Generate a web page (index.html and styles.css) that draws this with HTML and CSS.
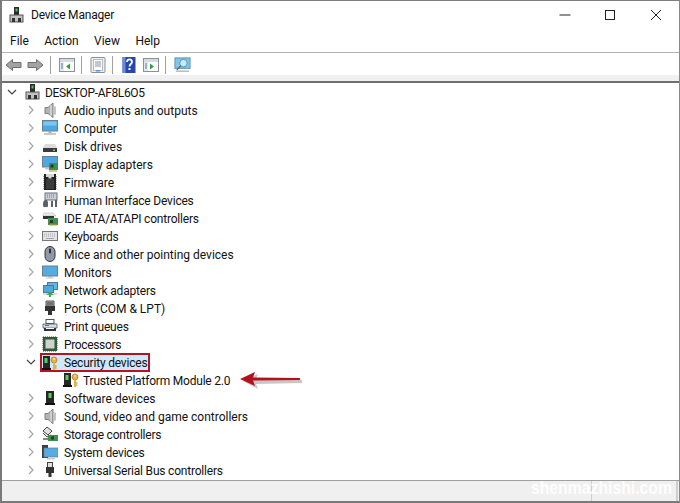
FILE: index.html
```html
<!DOCTYPE html>
<html lang="en">
<head>
<meta charset="utf-8">
<title>Device Manager</title>
<link rel="stylesheet" href="styles.css">
</head>
<body>
<svg class="defs" aria-hidden="true">
  <defs>
    <symbol id="pc" viewBox="0 0 16 16">
      <rect x="5" y="0" width="5" height="8" fill="#2a2a2a"/><rect x="6.500" y="1.500" width="2" height="3" fill="#5fbf5f"/>
      <rect x="1" y="8" width="13" height="7" fill="#c2c2c2" stroke="#555" stroke-width="1"/><rect x="3" y="11" width="3" height="4" fill="#333"/><rect x="9" y="11" width="3" height="4" fill="#333"/>
    </symbol>
    <symbol id="speaker" viewBox="0 0 16 16">
      <path d="M3 5.500h3L11 1v14.500L6 11.500H3z" fill="#b3b3b3" stroke="#808080"/><path d="M9 3v11" stroke="#e8e8e8"/><path d="M13 4.500v8" stroke="#c4c4c4" stroke-width="2"/>
    </symbol>
    <symbol id="monitor" viewBox="0 0 16 16">
      <rect x=".5" y=".5" width="15" height="10.500" fill="#4ea8e0" stroke="#6a7f90"/><rect x="1.500" y="1.500" width="13" height="4" fill="#7cc6f0"/><rect x="6.500" y="11" width="3" height="2" fill="#aab"/><rect x="2" y="13" width="12" height="2" fill="#c5c9ce"/>
    </symbol>
    <symbol id="disk" viewBox="0 0 16 16">
      <path d="M3 6h10l2 4v4H1v-4z" fill="#dcdcdc"/><rect x="1" y="10" width="14" height="4" fill="#3b3b3b"/><rect x="11" y="11.500" width="2" height="1.500" fill="#4ee04e"/>
    </symbol>
    <symbol id="display" viewBox="0 0 16 16">
      <rect x=".5" y=".5" width="15" height="10.500" fill="#4ea8e0" stroke="#6a7f90"/><rect x="3" y="12" width="5" height="1.500" fill="#c5c9ce"/><rect x="7" y="7" width="9" height="7" fill="#3f8f4f"/><rect x="8.500" y="8.500" width="3" height="3" fill="#1e3d24"/><path d="M8 14v2M10 14v2M12 14v2M14 14v2" stroke="#b08a2e"/>
    </symbol>
    <symbol id="chip" viewBox="0 0 16 16">
      <path d="M2 0h12v16H2z" fill="#222"/><path d="M4 0h8v3H9.500v1.500h-3V3H4z" fill="#d5d5d5"/><rect x="4" y="5" width="8" height="10" fill="#3c3c3c"/><path d="M1.500 2v13M14.500 2v13" stroke="#aaa" stroke-dasharray="1 1"/>
    </symbol>
    <symbol id="hid" viewBox="0 0 16 16">
      <rect x="3" y="1" width="12" height="7" fill="#c9ced6" stroke="#6a6f78"/><path d="M5 3h8M5 5h8" stroke="#7b8088" stroke-dasharray="1 1"/><path d="M1 13c0-4 1-5 3-5s2 2 2 5-1 2-2 2-3 1-3-2zM9 15V9h2v6zM13 15V8h2v7z" fill="#5b6068"/>
    </symbol>
    <symbol id="ide" viewBox="0 0 16 16">
      <path d="M2 3h9l3 3H1z" fill="#ececec" stroke="#aaa" stroke-width=".5"/><rect x="1" y="6" width="11" height="3" fill="#333"/><rect x="6" y="8" width="10" height="7" fill="#3c9150"/><rect x="8" y="10" width="3" height="3" fill="#1e3d24"/><path d="M7 15h8" stroke="#c9a13a"/>
    </symbol>
    <symbol id="keyboard" viewBox="0 0 16 16">
      <rect x=".5" y="3.500" width="15" height="9" fill="#e1e3e6" stroke="#777"/><path d="M2 6h12M2 8h12" stroke="#a4a8ae" stroke-dasharray="1 1"/><rect x="4" y="10" width="8" height="1" fill="#a4a8ae"/>
    </symbol>
    <symbol id="mouse" viewBox="0 0 16 16">
      <rect x="3" y=".5" width="10" height="15" rx="5" fill="#8f9aa6" stroke="#333"/><rect x="7" y="2.500" width="2" height="5" rx="1" fill="#2a2f35"/>
    </symbol>
    <symbol id="screen" viewBox="0 0 16 16">
      <rect x=".5" y="2" width="15" height="10" fill="#55ace2" stroke="#6a7f90"/><rect x="6" y="12" width="4" height="1.500" fill="#aab"/><rect x="4" y="13.500" width="8" height="1" fill="#c5c9ce"/>
    </symbol>
    <symbol id="network" viewBox="0 0 16 16">
      <rect x="5.500" y=".5" width="10" height="7" fill="#64b4e8" stroke="#4f7894"/><rect x="1.500" y="3.500" width="10" height="7" fill="#4ea8e0" stroke="#4f7894"/><path d="M1 12h14" stroke="#bbb"/><path d="M8 10l4 3H9v2H7v-2H4z" fill="#35b04a"/>
    </symbol>
    <symbol id="port" viewBox="0 0 16 16">
      <path d="M4 1h8v5H4z" fill="#aeb2b6" stroke="#555"/><path d="M6 2v3M8 2v3M10 2v3" stroke="#333"/><path d="M3 6h10v5h-3v4H6v-4H3z" fill="#333"/>
    </symbol>
    <symbol id="printer" viewBox="0 0 16 16">
      <rect x="4" y="1.500" width="8" height="4" fill="#fff" stroke="#555"/><path d="M1 6h14v4H1z" fill="#d9dce0" stroke="#555" stroke-width=".8"/><rect x="3" y="7" width="4" height="1" fill="#2b7fd1"/><rect x="2" y="10" width="12" height="3" fill="#333"/><rect x="4" y="10" width="8" height="1" fill="#fff"/>
    </symbol>
    <symbol id="cpu" viewBox="0 0 16 16">
      <rect x="1" y="1" width="14" height="14" fill="#2c5b35"/><rect x="3.500" y="3.500" width="9" height="9" fill="#cfd2cf"/><path d="M1 .5h14M1 15.500h14M.5 1v14M15.500 1v14" stroke="#b59c3f" stroke-dasharray="1 1"/>
    </symbol>
    <symbol id="tpm" viewBox="0 0 16 16">
      <rect x="1" y="1" width="7" height="14" fill="#262626"/><rect x="2.500" y="3" width="3" height="5" fill="#55d05a"/><rect x="0" y="13" width="9" height="2" fill="#111"/>
      <circle cx="12" cy="5" r="3" fill="#e8b23c" stroke="#a87a1c" stroke-width=".7"/><circle cx="12" cy="4" r=".8" fill="#fff"/><path d="M11 7.500h2V15h-2z" fill="#e8b23c"/><path d="M13 11h1.500M13 13h1.500" stroke="#a87a1c"/>
    </symbol>
    <symbol id="software" viewBox="0 0 16 16">
      <rect x="4" y="1" width="8" height="14" fill="#262626"/><rect x="6.500" y="3" width="3" height="5" fill="#55d05a"/><rect x="3" y="13" width="10" height="2" fill="#111"/>
    </symbol>
    <symbol id="storage" viewBox="0 0 16 16">
      <path d="M5 1l5 4-4 4-5-4z" fill="#e3e3e3" stroke="#444"/><path d="M1 7l4 4 4-2" fill="none" stroke="#444"/><rect x="6" y="9" width="10" height="6" fill="#3c9150"/><rect x="9" y="10.500" width="3" height="3" fill="#1e3d24"/><path d="M1 12h5v2H1z" fill="#888"/>
    </symbol>
    <symbol id="system" viewBox="0 0 16 16">
      <rect x="0" y="1" width="6" height="13" fill="#3a3f44"/><rect x="2" y="4" width="14" height="9" fill="#55ace2" stroke="#5f7f94" stroke-width=".7"/><rect x="5" y="14" width="8" height="1.500" fill="#c5c9ce"/>
    </symbol>
    <symbol id="usb" viewBox="0 0 16 16">
      <rect x="5.500" y=".5" width="5" height="5" fill="#e2e2e2" stroke="#444"/><path d="M4 5h8v6H9.500v4h-3v-4H4z" fill="#333"/>
    </symbol>
    <symbol id="app" viewBox="0 0 16 16">
      <rect x=".5" y="1.500" width="15" height="13" fill="#fff" stroke="#8b9096"/><rect x="1" y="2" width="14" height="3" fill="#d5dbe3"/><rect x="1" y="5" width="4" height="9" fill="#e7eaee"/><path d="M2 7h2M2 9h2M2 11h2" stroke="#4b79a8"/>
    </symbol>
  </defs>
</svg>

<div class="window">
  <header class="titlebar">
    <svg class="ico title-ico"><use href="#pc"/></svg>
    <span class="title tight">Device Manager</span>
    <div class="caption">
      <svg class="cap" viewBox="0 0 12 12"><path d="M.5 6h11" stroke="#222" fill="none"/></svg>
      <svg class="cap" viewBox="0 0 12 12"><rect x="1.500" y="1.500" width="9" height="9" stroke="#222" fill="none"/></svg>
      <svg class="cap" viewBox="0 0 12 12"><path d="M1 1l10 10M11 1L1 11" stroke="#222" fill="none"/></svg>
    </div>
  </header>

  <nav class="menubar">
    <span>File</span><span>Action</span><span>View</span><span>Help</span>
  </nav>

  <div class="toolbar">
    <svg class="tool wide" viewBox="0 0 16 16"><path d="M.5 8L7 2.500V5.500h8.500v5H7v3z" fill="#a3a3a3" stroke="#6f6f6f"/></svg>
    <svg class="tool wide" viewBox="0 0 16 16"><path d="M15.500 8L9 2.500V5.500H.5v5H9v3z" fill="#a3a3a3" stroke="#6f6f6f"/></svg>
    <i class="sep"></i>
    <svg class="tool"><use href="#app"/><path d="M11 6.500v6L7 9.500z" fill="#2f9e44"/></svg>
    <i class="sep"></i>
    <svg class="tool" viewBox="0 0 16 16"><rect x="1" y=".5" width="14" height="15" rx="1" fill="#eceff3" stroke="#8b9096"/><rect x="3.500" y="2.500" width="9" height="11" fill="#fff" stroke="#b7bcc2"/><path d="M5 5h6M5 7h6M5 9h6" stroke="#8a8f96"/><rect x="6" y="13" width="4" height="1.500" fill="#3da0e0"/></svg>
    <i class="sep"></i>
    <svg class="tool help" viewBox="0 0 16 16"><rect x="1.500" width="13" height="16" fill="#2748a8"/><rect x="1.500" width="3" height="16" fill="#6f8ad8"/><path d="M6 5c0-3.500 5-3.500 5 0 0 2-2.500 2-2.500 4.500" stroke="#fff" stroke-width="1.800" fill="none"/><rect x="7.500" y="11" width="2" height="2" fill="#fff"/></svg>
    <svg class="tool"><use href="#app"/><path d="M7 6.500v6l4-3z" fill="#2f9e44"/></svg>
    <i class="sep"></i>
    <svg class="tool wide" viewBox="0 0 18 16"><rect x="1" y=".5" width="16" height="11" fill="#7cc7ee" stroke="#5f8ea8"/><circle cx="10" cy="6" r="4" fill="#c8ecfb" stroke="#4f91b5"/><path d="M7 9l-4 4" stroke="#666" stroke-width="1.500"/><path d="M2 14.500h14" stroke="#8d949b"/></svg>
  </div>
  <div class="band"></div>

  <main class="tree">
    <div class="row root">
      <svg class="chev" viewBox="0 0 10 10"><path d="M1 3l4 4 4-4" fill="none" stroke="#444" stroke-width="1.200"/></svg>
      <svg class="ico"><use href="#pc"/></svg><span class="tighter">DESKTOP-AF8L6O5</span>
    </div>
    <div class="row"><svg class="chev" viewBox="0 0 10 10"><path d="M3 1l4 4-4 4" fill="none" stroke="#a6a6a6" stroke-width="1.200"/></svg><svg class="ico"><use href="#speaker"/></svg><span>Audio inputs and outputs</span></div>
    <div class="row"><svg class="chev" viewBox="0 0 10 10"><path d="M3 1l4 4-4 4" fill="none" stroke="#a6a6a6" stroke-width="1.200"/></svg><svg class="ico"><use href="#monitor"/></svg><span>Computer</span></div>
    <div class="row"><svg class="chev" viewBox="0 0 10 10"><path d="M3 1l4 4-4 4" fill="none" stroke="#a6a6a6" stroke-width="1.200"/></svg><svg class="ico"><use href="#disk"/></svg><span>Disk drives</span></div>
    <div class="row"><svg class="chev" viewBox="0 0 10 10"><path d="M3 1l4 4-4 4" fill="none" stroke="#a6a6a6" stroke-width="1.200"/></svg><svg class="ico"><use href="#display"/></svg><span>Display adapters</span></div>
    <div class="row"><svg class="chev" viewBox="0 0 10 10"><path d="M3 1l4 4-4 4" fill="none" stroke="#a6a6a6" stroke-width="1.200"/></svg><svg class="ico"><use href="#chip"/></svg><span>Firmware</span></div>
    <div class="row"><svg class="chev" viewBox="0 0 10 10"><path d="M3 1l4 4-4 4" fill="none" stroke="#a6a6a6" stroke-width="1.200"/></svg><svg class="ico"><use href="#hid"/></svg><span class="tight">Human Interface Devices</span></div>
    <div class="row"><svg class="chev" viewBox="0 0 10 10"><path d="M3 1l4 4-4 4" fill="none" stroke="#a6a6a6" stroke-width="1.200"/></svg><svg class="ico"><use href="#ide"/></svg><span class="tight">IDE ATA/ATAPI controllers</span></div>
    <div class="row"><svg class="chev" viewBox="0 0 10 10"><path d="M3 1l4 4-4 4" fill="none" stroke="#a6a6a6" stroke-width="1.200"/></svg><svg class="ico"><use href="#keyboard"/></svg><span class="tight">Keyboards</span></div>
    <div class="row"><svg class="chev" viewBox="0 0 10 10"><path d="M3 1l4 4-4 4" fill="none" stroke="#a6a6a6" stroke-width="1.200"/></svg><svg class="ico"><use href="#mouse"/></svg><span>Mice and other pointing devices</span></div>
    <div class="row"><svg class="chev" viewBox="0 0 10 10"><path d="M3 1l4 4-4 4" fill="none" stroke="#a6a6a6" stroke-width="1.200"/></svg><svg class="ico"><use href="#screen"/></svg><span>Monitors</span></div>
    <div class="row"><svg class="chev" viewBox="0 0 10 10"><path d="M3 1l4 4-4 4" fill="none" stroke="#a6a6a6" stroke-width="1.200"/></svg><svg class="ico"><use href="#network"/></svg><span class="tight">Network adapters</span></div>
    <div class="row"><svg class="chev" viewBox="0 0 10 10"><path d="M3 1l4 4-4 4" fill="none" stroke="#a6a6a6" stroke-width="1.200"/></svg><svg class="ico"><use href="#port"/></svg><span>Ports (COM &amp; LPT)</span></div>
    <div class="row"><svg class="chev" viewBox="0 0 10 10"><path d="M3 1l4 4-4 4" fill="none" stroke="#a6a6a6" stroke-width="1.200"/></svg><svg class="ico"><use href="#printer"/></svg><span class="tight">Print queues</span></div>
    <div class="row"><svg class="chev" viewBox="0 0 10 10"><path d="M3 1l4 4-4 4" fill="none" stroke="#a6a6a6" stroke-width="1.200"/></svg><svg class="ico"><use href="#cpu"/></svg><span class="tighter">Processors</span></div>
    <div class="row open">
      <svg class="chev" viewBox="0 0 10 10"><path d="M1 3l4 4 4-4" fill="none" stroke="#444" stroke-width="1.200"/></svg>
      <div class="selected"><svg class="ico"><use href="#tpm"/></svg><span class="tight">Security devices</span></div>
    </div>
    <div class="row child">
      <svg class="ico"><use href="#tpm"/></svg><span class="tight">Trusted Platform Module 2.0</span>
      <svg class="arrow" viewBox="0 0 64 18"><path d="M1 8l15-7-2 5 46 1v3l-46 1 2 5z" fill="#000" opacity=".22" transform="translate(2 2)"/><path d="M0 8l15-7-2 5.500 47 .5v2l-47 .5 2 5.500z" fill="#b3121d"/></svg>
    </div>
    <div class="row"><svg class="chev" viewBox="0 0 10 10"><path d="M3 1l4 4-4 4" fill="none" stroke="#a6a6a6" stroke-width="1.200"/></svg><svg class="ico"><use href="#software"/></svg><span>Software devices</span></div>
    <div class="row"><svg class="chev" viewBox="0 0 10 10"><path d="M3 1l4 4-4 4" fill="none" stroke="#a6a6a6" stroke-width="1.200"/></svg><svg class="ico"><use href="#speaker"/></svg><span>Sound, video and game controllers</span></div>
    <div class="row"><svg class="chev" viewBox="0 0 10 10"><path d="M3 1l4 4-4 4" fill="none" stroke="#a6a6a6" stroke-width="1.200"/></svg><svg class="ico"><use href="#storage"/></svg><span class="tight">Storage controllers</span></div>
    <div class="row"><svg class="chev" viewBox="0 0 10 10"><path d="M3 1l4 4-4 4" fill="none" stroke="#a6a6a6" stroke-width="1.200"/></svg><svg class="ico"><use href="#system"/></svg><span class="tight">System devices</span></div>
    <div class="row"><svg class="chev" viewBox="0 0 10 10"><path d="M3 1l4 4-4 4" fill="none" stroke="#a6a6a6" stroke-width="1.200"/></svg><svg class="ico"><use href="#usb"/></svg><span class="tight">Universal Serial Bus controllers</span></div>
  </main>

  <footer class="statusbar"><i></i><i></i><i></i></footer>
  <div class="watermark">shenmazhishi.com</div>
</div>
</body>
</html>
```

FILE: styles.css
```css
* { box-sizing: border-box; }
html, body { margin: 0; padding: 0; }
body {
  width: 680px;
  height: 503px;
  overflow: hidden;
  background: #fff;
  font-family: Roboto, "Open Sans", sans-serif;
  font-size: 12px;
  color: #111;
}
.tight { letter-spacing: -.2px; }
.tighter { letter-spacing: -.35px; }
.defs { position: absolute; width: 0; height: 0; }
.window {
  position: relative;
  width: 680px;
  height: 503px;
  display: flex;
  flex-direction: column;
  background: #fff;
  border-top: 1px solid #7f7f7f;
  border-left: 2px solid #7a7a7a;
  border-right: 1px solid #8a8a8a;
  border-bottom: 2px solid #7a7a7a;
}
.titlebar {
  height: 28px;
  flex: none;
  display: flex;
  align-items: center;
  padding-left: 7px;
}
.title-ico { width: 15px; height: 16px; margin-right: 5px; }
.caption {
  margin-left: auto;
  display: flex;
  gap: 34px;
  padding-right: 17px;
  align-items: center;
}
.cap { width: 12px; height: 12px; display: block; }
.cap:first-child { margin-right: -1px; }
.menubar {
  height: 24px;
  flex: none;
  display: flex;
  align-items: center;
  gap: 15.4px;
  padding-left: 8px;
  border-bottom: 1px solid #b4b4b4;
}
.toolbar {
  height: 22px;
  flex: none;
  display: flex;
  align-items: center;
  padding: 1px 0 0 3px;
}
.tool { width: 16px; height: 16px; flex: none; margin-right: 5px; }
.tool.wide { width: 17px; }
.tool.help { margin-right: 6px; }
.sep {
  width: 1px;
  height: 18px;
  flex: none;
  background: #a0a0a0;
  margin: 0 8px 0 1px;
}
.band {
  height: 8px;
  flex: none;
  background: #f0f0f0;
  border-bottom: 2px solid #6f6f6f;
}
.tree {
  flex: 1;
  min-height: 0;
}
.row {
  height: 18px;
  display: flex;
  align-items: center;
  padding-left: 24px;
  position: relative;
  white-space: nowrap;
}
.row span { padding-top: 2px; }
.row.open span { padding-top: 0; }
.chev { width: 10px; height: 10px; flex: none; margin-right: 6px; }
.ico { width: 16px; height: 16px; flex: none; margin-right: 6px; display: block; }
.row.root { padding-left: 5px; }
.row.root .chev { margin-right: 8px; }
.row.root .ico { margin-right: 4px; }
.row.open .selected {
  display: flex;
  align-items: center;
  height: 15px;
  margin-top: 1px;
  padding-right: 1px;
  background: #cde8ff;
  outline: 2px solid #b01622;
}
.row.child { padding-left: 61px; }
.row.child .ico { margin-right: 4px; }
.arrow {
  position: absolute;
  left: 238px;
  top: 0;
  width: 64px;
  height: 18px;
}
.statusbar {
  height: 21px;
  margin-top: auto;
  flex: none;
  background: #f0f0f0;
  border-top: 1px solid #a0a0a0;
  display: flex;
}
.statusbar i { border-right: 1px solid #cfcfcf; display: block; }
.statusbar i:nth-child(1) { width: 590px; }
.statusbar i:nth-child(2) { width: 85px; }
.watermark {
  position: absolute;
  right: 7px;
  bottom: 2px;
  font-family: "Liberation Sans", sans-serif;
  font-weight: 700;
  font-size: 19px;
  color: rgba(255, 255, 255, .9);
  transform: scaleX(.83);
  transform-origin: right center;
}
```
